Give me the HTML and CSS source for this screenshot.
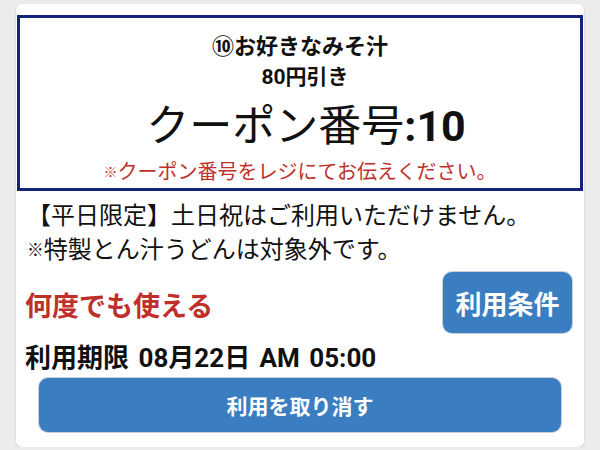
FILE: index.html
```html
<!DOCTYPE html>
<html lang="ja">
<head>
<meta charset="utf-8">
<link rel="stylesheet" href="styles.css">
</head>
<body>
<div class="card">
  <div class="coupon">
    <div class="title">⑩お好きなみそ汁</div>
    <div class="discount">80円引き</div>
    <div class="number">クーポン番号<b>:10</b></div>
    <div class="note"><span class="mark">※</span>クーポン番号をレジにてお伝えください。</div>
  </div>
  <div class="body">
    <p class="desc">【平日限定】土日祝はご利用いただけません。<br><span class="mark">※</span>特製とん汁うどんは対象外です。</p>
    <div class="row">
      <span class="repeat">何度でも使える</span>
      <button class="btn cond">利用条件</button>
    </div>
    <div class="expire">利用期限 08月22日 AM 05:00</div>
    <button class="btn cancel">利用を取り消す</button>
  </div>
</div>
</body>
</html>
```
FILE: styles.css
```css
html, body {
  margin: 0;
  padding: 0;
  background: #ececec;
  font-family: Roboto, "Noto Sans CJK JP", sans-serif;
  color: #111;
}
.card {
  margin: 4px 16px 0;
  height: 443px;
  box-sizing: border-box;
  background: #fff;
  border-radius: 6px;
  box-shadow: 0 1px 2px rgba(0,0,0,0.18);
  padding: 11px 1px 0;
}
.coupon {
  border: 3px solid #13247a;
  text-align: center;
  padding: 13px 0 3px;
}
.title, .discount {
  font-weight: bold;
  line-height: 31px;
}
.title {
  font-size: 22px;
}
.discount {
  font-size: 21px;
  padding-left: 10px;
}
.number {
  font-size: 43px;
  line-height: 66px;
  font-weight: normal;
  padding-left: 12px;
}
.number b {
  font-weight: bold;
}
.note {
  font-size: 20px;
  line-height: 26px;
  color: #c0302a;
}
.mark {
  font-size: 0.7em;
  vertical-align: 0.12em;
}
.body {
  padding: 0 11px 0 10px;
}
.desc {
  margin: 8px 0 0;
  font-size: 24px;
  line-height: 34px;
}
.row {
  margin-top: 5px;
  margin-left: -2px;
  display: flex;
  justify-content: space-between;
  align-items: center;
}
.repeat {
  font-size: 27px;
  font-weight: bold;
  color: #c0302a;
  padding-top: 4px;
}
.btn {
  border: none;
  background: #3a7dc0;
  color: #fff;
  font-family: Roboto, "Noto Sans CJK JP", sans-serif;
  font-weight: bold;
  border-radius: 9px;
  box-shadow: 0 0 0 1px rgba(30,70,120,0.25);
}
.cond {
  width: 129px;
  height: 61px;
  font-size: 26px;
  padding: 0;
}
.expire {
  margin-top: 10px;
  margin-left: -2px;
  font-size: 26px;
  line-height: 30px;
  font-weight: bold;
  word-spacing: 3px;
}
.cancel {
  display: block;
  margin: 5px 11px 0 12px;
  width: calc(100% - 23px);
  height: 54px;
  font-size: 21px;
  padding: 0;
}
```
